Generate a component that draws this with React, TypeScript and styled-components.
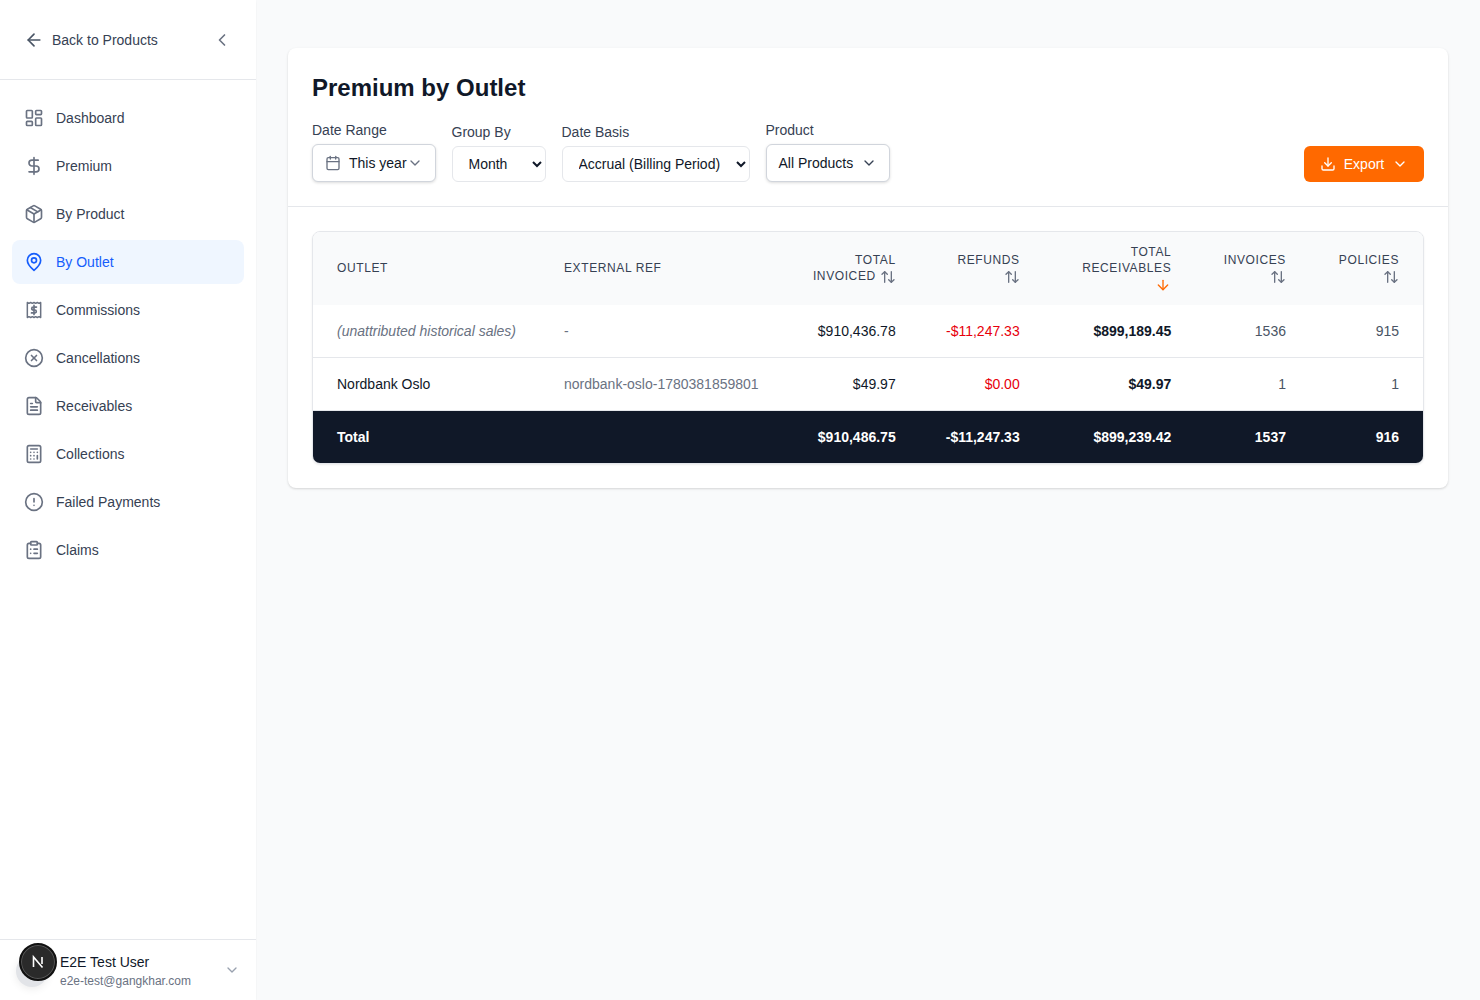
import React from 'react';
import styled, { createGlobalStyle } from 'styled-components';
import {
  ArrowLeft, ChevronLeft, ChevronDown, LayoutDashboard, DollarSign, Package, CircleX, FileText,
  Calculator, CircleAlert, ClipboardList, Calendar, Download, ArrowUpDown, ArrowDown,
} from 'lucide-react';

const FONT = '"Liberation Sans", Arial, sans-serif';

const Global = createGlobalStyle`
  html, body { margin: 0; padding: 0; background: #f9fafb; }
  body { font-family: ${FONT}; color: #101828; }
  * { box-sizing: border-box; }
`;

const Page = styled.div`display: flex; height: 1000px; width: 1480px; overflow: hidden;`;
const Sidebar = styled.aside`
  width: 256px; flex: none; background: #fff; display: flex; flex-direction: column;
  box-shadow: 0 1px 2px rgba(0,0,0,.05);
`;
const SideTop = styled.div`
  height: 80px; border-bottom: 1px solid #e5e7eb; display: flex; align-items: center;
  justify-content: space-between; padding: 0 24px;
`;
const BackLink = styled.a`display: flex; align-items: center; gap: 8px; font-size: 14px; color: #364153; svg { color: #4a5565; }`;
const Collapse = styled.span`display: flex; color: #6a7282;`;
const Nav = styled.nav`flex: 1; display: flex; flex-direction: column; gap: 4px; padding: 16px 12px;`;
const NavItem = styled.a<{ $active?: boolean }>`
  height: 44px; display: flex; align-items: center; gap: 12px; padding: 0 12px; border-radius: 8px;
  font-size: 14px; color: ${p => (p.$active ? '#155dfc' : '#364153')};
  background: ${p => (p.$active ? '#eff6ff' : 'transparent')};
  svg { color: ${p => (p.$active ? '#155dfc' : '#6a7282')}; flex: none; }
`;
const Footer = styled.div`
  position: relative; height: 61px; border-top: 1px solid #e5e7eb; display: flex; align-items: center;
  padding: 0 16px 0 60px; justify-content: space-between;
`;
const UserText = styled.div`display: flex; flex-direction: column; gap: 1px; margin-top: 1px;`;
const UserName = styled.div`font-size: 14px; line-height: 20px; color: #101828;`;
const UserEmail = styled.div`font-size: 12px; line-height: 16px; color: #6a7282;`;
const FooterChevron = styled.span`display: flex; color: #99a1af;`;
const AvatarBack = styled.span`
  position: absolute; left: 16px; top: 15px; width: 32px; height: 32px; border-radius: 50%;
  background: #e2e4e8; box-shadow: 0 2px 8px rgba(0,0,0,.08);
`;
const DevBadge = styled.span`
  position: absolute; left: 19px; top: 3px; width: 38px; height: 38px; border-radius: 50%;
  background: #2a2a2a; border: 2px solid #111; box-shadow: inset 0 0 0 1px #555; color: #fff;
  display: flex; align-items: center; justify-content: center;
`;
const Main = styled.main`flex: 1; padding: 48px 32px;`;
const Card = styled.section`background: #fff; border-radius: 8px; box-shadow: 0 1px 3px rgba(0,0,0,.1), 0 1px 2px rgba(0,0,0,.06);`;
const CardHead = styled.div`padding: 24px; border-bottom: 1px solid #e5e7eb;`;
const Title = styled.h1`margin: 0 0 16px; font-size: 24px; line-height: 32px; font-weight: 700; color: #101828;`;
const FilterRow = styled.div`display: flex; align-items: flex-end; justify-content: space-between;`;
const Filters = styled.div`display: flex; align-items: flex-end; gap: 16px;`;
const Field = styled.div`display: flex; flex-direction: column; gap: 4px;`;
const FieldLabel = styled.label`font-size: 14px; line-height: 20px; color: #364153;`;
const PickerButton = styled.button`
  height: 38px; display: flex; align-items: center; background: #fff; color: #101828;
  border: 1px solid #d1d5dc; border-radius: 6px; box-shadow: 0 1px 3px rgba(0,0,0,.14);
  font: 14px ${FONT}; padding: 0 12px; white-space: nowrap;
  svg { color: #6a7282; flex: none; }
`;
const DateButton = styled(PickerButton)`width: 123.5px; gap: 8px; span { margin-right: -8px; }`;
const ProductButton = styled(PickerButton)`width: 124px; justify-content: space-between; svg { color: #364153; }`;
const NativeSelect = styled.select<{ $w: number }>`
  width: ${p => p.$w}px; height: 36px; background: #fff; color: #101828; border: 1px solid #e5e7eb;
  border-radius: 6px; font: 14px ${FONT}; padding: 0 8px 0 12px;
`;
const ExportButton = styled.button`
  width: 120px; height: 36px; background: #ff6900; color: #fff; border: 0; border-radius: 6px;
  display: flex; align-items: center; justify-content: center; gap: 8px; font: 14px ${FONT};
`;
const CardBody = styled.div`padding: 24px;`;
const TableWrap = styled.div`border: 1px solid #e5e7eb; border-radius: 8px; overflow: hidden; box-shadow: 0 1px 2px rgba(0,0,0,.08);`;
const Table = styled.table`width: 100%; border-collapse: separate; border-spacing: 0; table-layout: fixed;`;
const HeadRow = styled.tr`height: 73px; background: #f9fafb;`;
const Th = styled.th<{ $left?: boolean }>`
  padding: 7.5px 24px 8.5px; font-size: 12px; line-height: 16px; font-weight: 400; letter-spacing: .6px;
  color: #364153; text-align: ${p => (p.$left ? 'left' : 'right')}; vertical-align: middle;
  svg { display: inline-block; vertical-align: baseline; margin: -5px 0; color: #6a7282; }
`;
const SortDown = styled(ArrowDown)`&& { color: #ff6900; }`;
const Row = styled.tr`height: 53px;`;
const TotalRow = styled.tr`height: 52px; background: #101828; color: #fff;`;
const Td = styled.td<{ $c?: string; $bold?: boolean; $left?: boolean; $italic?: boolean; $line?: boolean }>`
  padding: 0 24px; font-size: 14px; white-space: nowrap;
  border-bottom: ${p => (p.$line === false ? '0' : '1px solid #e5e7eb')};
  text-align: ${p => (p.$left ? 'left' : 'right')};
  color: ${p => p.$c || 'inherit'}; font-weight: ${p => (p.$bold ? 700 : 400)};
  font-style: ${p => (p.$italic ? 'italic' : 'normal')};
`;
const Col = styled.col<{ $w: number }>`width: ${p => p.$w}px;`;

const ReceiptDollar = (p: { size?: number }) => (
  <svg width={p.size || 20} height={p.size || 20} viewBox="0 0 24 24" fill="none" stroke="currentColor" strokeWidth="2" strokeLinecap="round" strokeLinejoin="round">
    <path d="M4 3l2 1 2-1 2 1 2-1 2 1 2-1 2 1 2-1v18l-2-1-2 1-2-1-2 1-2-1-2 1-2-1-2 1z" strokeWidth="1.8" />
    <path d="M15 8.500h-4a1.750 1.750 0 0 0 0 3.500h2a1.750 1.750 0 0 1 0 3.500H9M12 6.500v11" />
  </svg>
);
const Pin = (p: { size?: number }) => (
  <svg width={p.size || 20} height={p.size || 20} viewBox="0 0 24 24" fill="none" stroke="currentColor" strokeWidth="2" strokeLinecap="round" strokeLinejoin="round">
    <path d="M20 10c0 5-5.500 10-8 12-2.500-2-8-7-8-12a8 8 0 0 1 16 0z" />
    <circle cx="12" cy="10" r="3" />
  </svg>
);

const navItems: [string, React.ComponentType<{ size?: number }>][] = [
  ['Dashboard', LayoutDashboard], ['Premium', DollarSign], ['By Product', Package], ['By Outlet', Pin],
  ['Commissions', ReceiptDollar], ['Cancellations', CircleX], ['Receivables', FileText],
  ['Collections', Calculator], ['Failed Payments', CircleAlert], ['Claims', ClipboardList],
];

const Sort = () => <ArrowUpDown size={16} />;

export default function App() {
  return (
    <Page>
      <Global />
      <Sidebar>
        <SideTop>
          <BackLink><ArrowLeft size={20} />Back to Products</BackLink>
          <Collapse><ChevronLeft size={20} /></Collapse>
        </SideTop>
        <Nav>
          {navItems.map(([label, Icon]) => (
            <NavItem key={label} $active={label === 'By Outlet'}><Icon size={20} />{label}</NavItem>
          ))}
        </Nav>
        <Footer>
          <AvatarBack />
          <DevBadge>
            <svg width="16" height="16" viewBox="0 0 16 16" fill="none" stroke="#fff" strokeWidth="1.6"><path d="M3.500 13V3l9 10.500M12 3v7" /></svg>
          </DevBadge>
          <UserText>
            <UserName>E2E Test User</UserName>
            <UserEmail>e2e-test@gangkhar.com</UserEmail>
          </UserText>
          <FooterChevron><ChevronDown size={16} /></FooterChevron>
        </Footer>
      </Sidebar>
      <Main>
        <Card>
          <CardHead>
            <Title>Premium by Outlet</Title>
            <FilterRow>
              <Filters>
                <Field>
                  <FieldLabel>Date Range</FieldLabel>
                  <DateButton><Calendar size={16} /><span>This year</span><ChevronDown size={16} /></DateButton>
                </Field>
                <Field>
                  <FieldLabel>Group By</FieldLabel>
                  <NativeSelect $w={94} defaultValue="Month"><option>Month</option></NativeSelect>
                </Field>
                <Field>
                  <FieldLabel>Date Basis</FieldLabel>
                  <NativeSelect $w={188} defaultValue="Accrual (Billing Period)"><option>Accrual (Billing Period)</option></NativeSelect>
                </Field>
                <Field>
                  <FieldLabel>Product</FieldLabel>
                  <ProductButton>All Products<ChevronDown size={16} /></ProductButton>
                </Field>
              </Filters>
              <ExportButton><Download size={16} />Export<ChevronDown size={16} /></ExportButton>
            </FilterRow>
          </CardHead>
          <CardBody>
            <TableWrap>
              <Table>
                <colgroup>
                  <Col $w={227} /><Col $w={243} /><Col $w={136.700} /><Col $w={124} /><Col $w={151.600} /><Col $w={114.700} /><Col $w={113} />
                </colgroup>
                <thead>
                  <HeadRow>
                    <Th $left>OUTLET</Th>
                    <Th $left>EXTERNAL REF</Th>
                    <Th>TOTAL INVOICED <Sort /></Th>
                    <Th>REFUNDS <Sort /></Th>
                    <Th>TOTAL RECEIVABLES <SortDown size={16} /></Th>
                    <Th>INVOICES <Sort /></Th>
                    <Th>POLICIES <Sort /></Th>
                  </HeadRow>
                </thead>
                <tbody>
                  <Row>
                    <Td $left $italic $c="#6a7282">(unattributed historical sales)</Td>
                    <Td $left $c="#6a7282">-</Td>
                    <Td>$910,436.78</Td>
                    <Td $c="#e7000b">-$11,247.33</Td>
                    <Td $bold>$899,189.45</Td>
                    <Td $c="#4a5565">1536</Td>
                    <Td $c="#4a5565">915</Td>
                  </Row>
                  <Row>
                    <Td $left>Nordbank Oslo</Td>
                    <Td $left $c="#6a7282">nordbank-oslo-1780381859801</Td>
                    <Td>$49.97</Td>
                    <Td $c="#e7000b">$0.00</Td>
                    <Td $bold>$49.97</Td>
                    <Td $c="#4a5565">1</Td>
                    <Td $c="#4a5565">1</Td>
                  </Row>
                  <TotalRow>
                    <Td $line={false} $left $bold>Total</Td>
                    <Td $line={false} />
                    <Td $line={false} $bold>$910,486.75</Td>
                    <Td $line={false} $bold>-$11,247.33</Td>
                    <Td $line={false} $bold>$899,239.42</Td>
                    <Td $line={false} $bold>1537</Td>
                    <Td $line={false} $bold>916</Td>
                  </TotalRow>
                </tbody>
              </Table>
            </TableWrap>
          </CardBody>
        </Card>
      </Main>
    </Page>
  );
}
